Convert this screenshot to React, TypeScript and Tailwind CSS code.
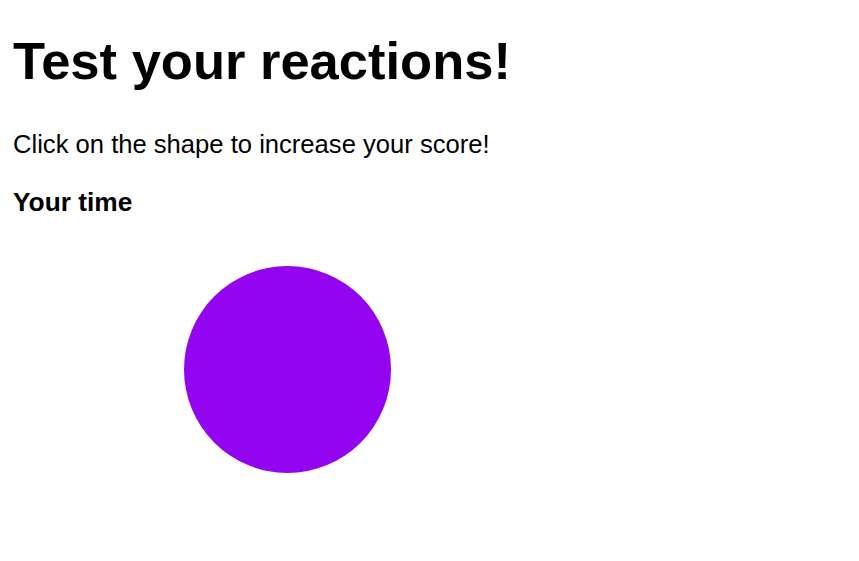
import React from "react";

export default function App() {
  return (
    <div
      className="w-[859px] h-[561px] bg-white text-black px-[13px]"
      style={{ fontFamily: '"Liberation Sans", Arial, sans-serif' }}
    >
      <h1 className="pt-[31px] text-[52.5px] leading-[59px] font-bold">Test your reactions!</h1>
      <p className="mt-[40px] text-[25.6px] leading-[29px]">Click on the shape to increase your score!</p>
      <h4 className="mt-[29px] text-[26.3px] leading-[29px] font-bold">Your time</h4>
      <div className="mt-[49px] ml-[171px] w-[207px] h-[207px] rounded-full bg-[#9305f0]" />
    </div>
  );
}
